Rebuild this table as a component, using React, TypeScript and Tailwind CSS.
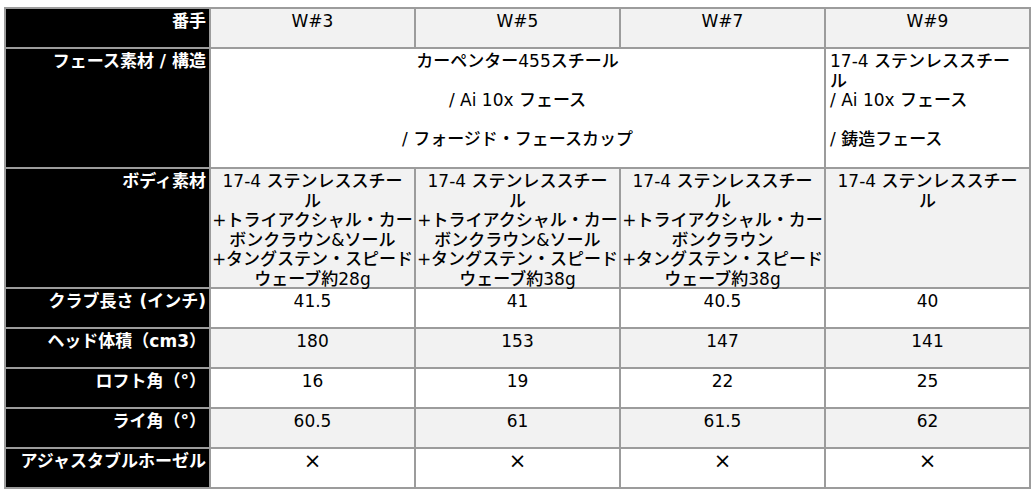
const font = "font-['DejaVu_Sans','Noto_Sans_CJK_JP',sans-serif]";

type Row = {
  label: string;
  cells: React.ReactNode[];
  tall?: boolean;
  gray?: boolean;
};

const lines = (...xs: string[]) => (
  <>
    {xs.map((x, i) => (
      <div key={i} className="whitespace-nowrap">
        {x}
      </div>
    ))}
  </>
);

const body28 = lines(
  "17-4 ステンレススチー",
  "ル",
  "+トライアクシャル・カー",
  "ボンクラウン&ソール",
  "+タングステン・スピード",
  "ウェーブ約28g"
);
const body38a = lines(
  "17-4 ステンレススチー",
  "ル",
  "+トライアクシャル・カー",
  "ボンクラウン&ソール",
  "+タングステン・スピード",
  "ウェーブ約38g"
);
const body38b = lines(
  "17-4 ステンレススチー",
  "ル",
  "+トライアクシャル・カー",
  "ボンクラウン",
  "+タングステン・スピード",
  "ウェーブ約38g"
);

const cross = <span className="text-[21px] leading-[19.5px]">×</span>;

const simpleRows: Row[] = [
  { label: "クラブ長さ (インチ)", cells: ["41.5", "41", "40.5", "40"] },
  { label: "ヘッド体積（cm3）", cells: ["180", "153", "147", "141"], gray: true },
  { label: "ロフト角（°）", cells: ["16", "19", "22", "25"] },
  { label: "ライ角（°）", cells: ["60.5", "61", "61.5", "62"], gray: true },
  { label: "アジャスタブルホーゼル", cells: [cross, cross, cross, cross] },
];

function Label({ children, tall }: { children: React.ReactNode; tall?: boolean }) {
  return (
    <div
      className={`bg-black text-white text-right pr-[3px] pt-[3px] font-semibold whitespace-nowrap ${
        tall ? "h-[118px]" : "h-[38px]"
      }`}
    >
      {children}
    </div>
  );
}

function Cell({
  children,
  gray,
  tall,
}: {
  children: React.ReactNode;
  gray?: boolean;
  tall?: boolean;
}) {
  return (
    <div
      className={`text-center text-black pt-[3px] ${gray ? "bg-[#f2f2f2]" : "bg-white"} ${
        tall ? "h-[118px]" : "h-[38px]"
      }`}
    >
      {children}
    </div>
  );
}

export default function App() {
  return (
    <div className={`w-[1036px] h-[498px] bg-white pt-[7px] pl-[4px] ${font}`}>
      <div className="grid grid-cols-[repeat(5,203px)] gap-[2px] p-[2px] bg-[#9c9c9c] w-fit text-[17px] leading-[19.5px] font-medium">
        {/* header */}
        <Label>番手</Label>
        {["W#3", "W#5", "W#7", "W#9"].map((w) => (
          <Cell key={w} gray>
            {w}
          </Cell>
        ))}

        {/* face */}
        <Label tall>フェース素材 / 構造</Label>
        <div className="col-span-3 bg-white h-[118px] text-center pt-[3px]">
          <div>カーペンター455スチール</div>
          <div>&nbsp;</div>
          <div>/ Ai 10x フェース</div>
          <div>&nbsp;</div>
          <div>/ フォージド・フェースカップ</div>
        </div>
        <div className="bg-white h-[118px] text-left pl-[4px] pt-[3px] whitespace-nowrap">
          <div>17-4 ステンレススチー</div>
          <div>ル</div>
          <div>/ Ai 10x フェース</div>
          <div>&nbsp;</div>
          <div>/ 鋳造フェース</div>
        </div>

        {/* body */}
        <Label tall>ボディ素材</Label>
        <Cell gray tall>
          {body28}
        </Cell>
        <Cell gray tall>
          {body38a}
        </Cell>
        <Cell gray tall>
          {body38b}
        </Cell>
        <Cell gray tall>
          {lines("17-4 ステンレススチー", "ル")}
        </Cell>

        {simpleRows.map((r) => (
          <Row key={r.label} row={r} />
        ))}
      </div>
    </div>
  );
}

function Row({ row }: { row: Row }) {
  return (
    <>
      <Label>{row.label}</Label>
      {row.cells.map((c, i) => (
        <Cell key={i} gray={row.gray}>
          {c}
        </Cell>
      ))}
    </>
  );
}
